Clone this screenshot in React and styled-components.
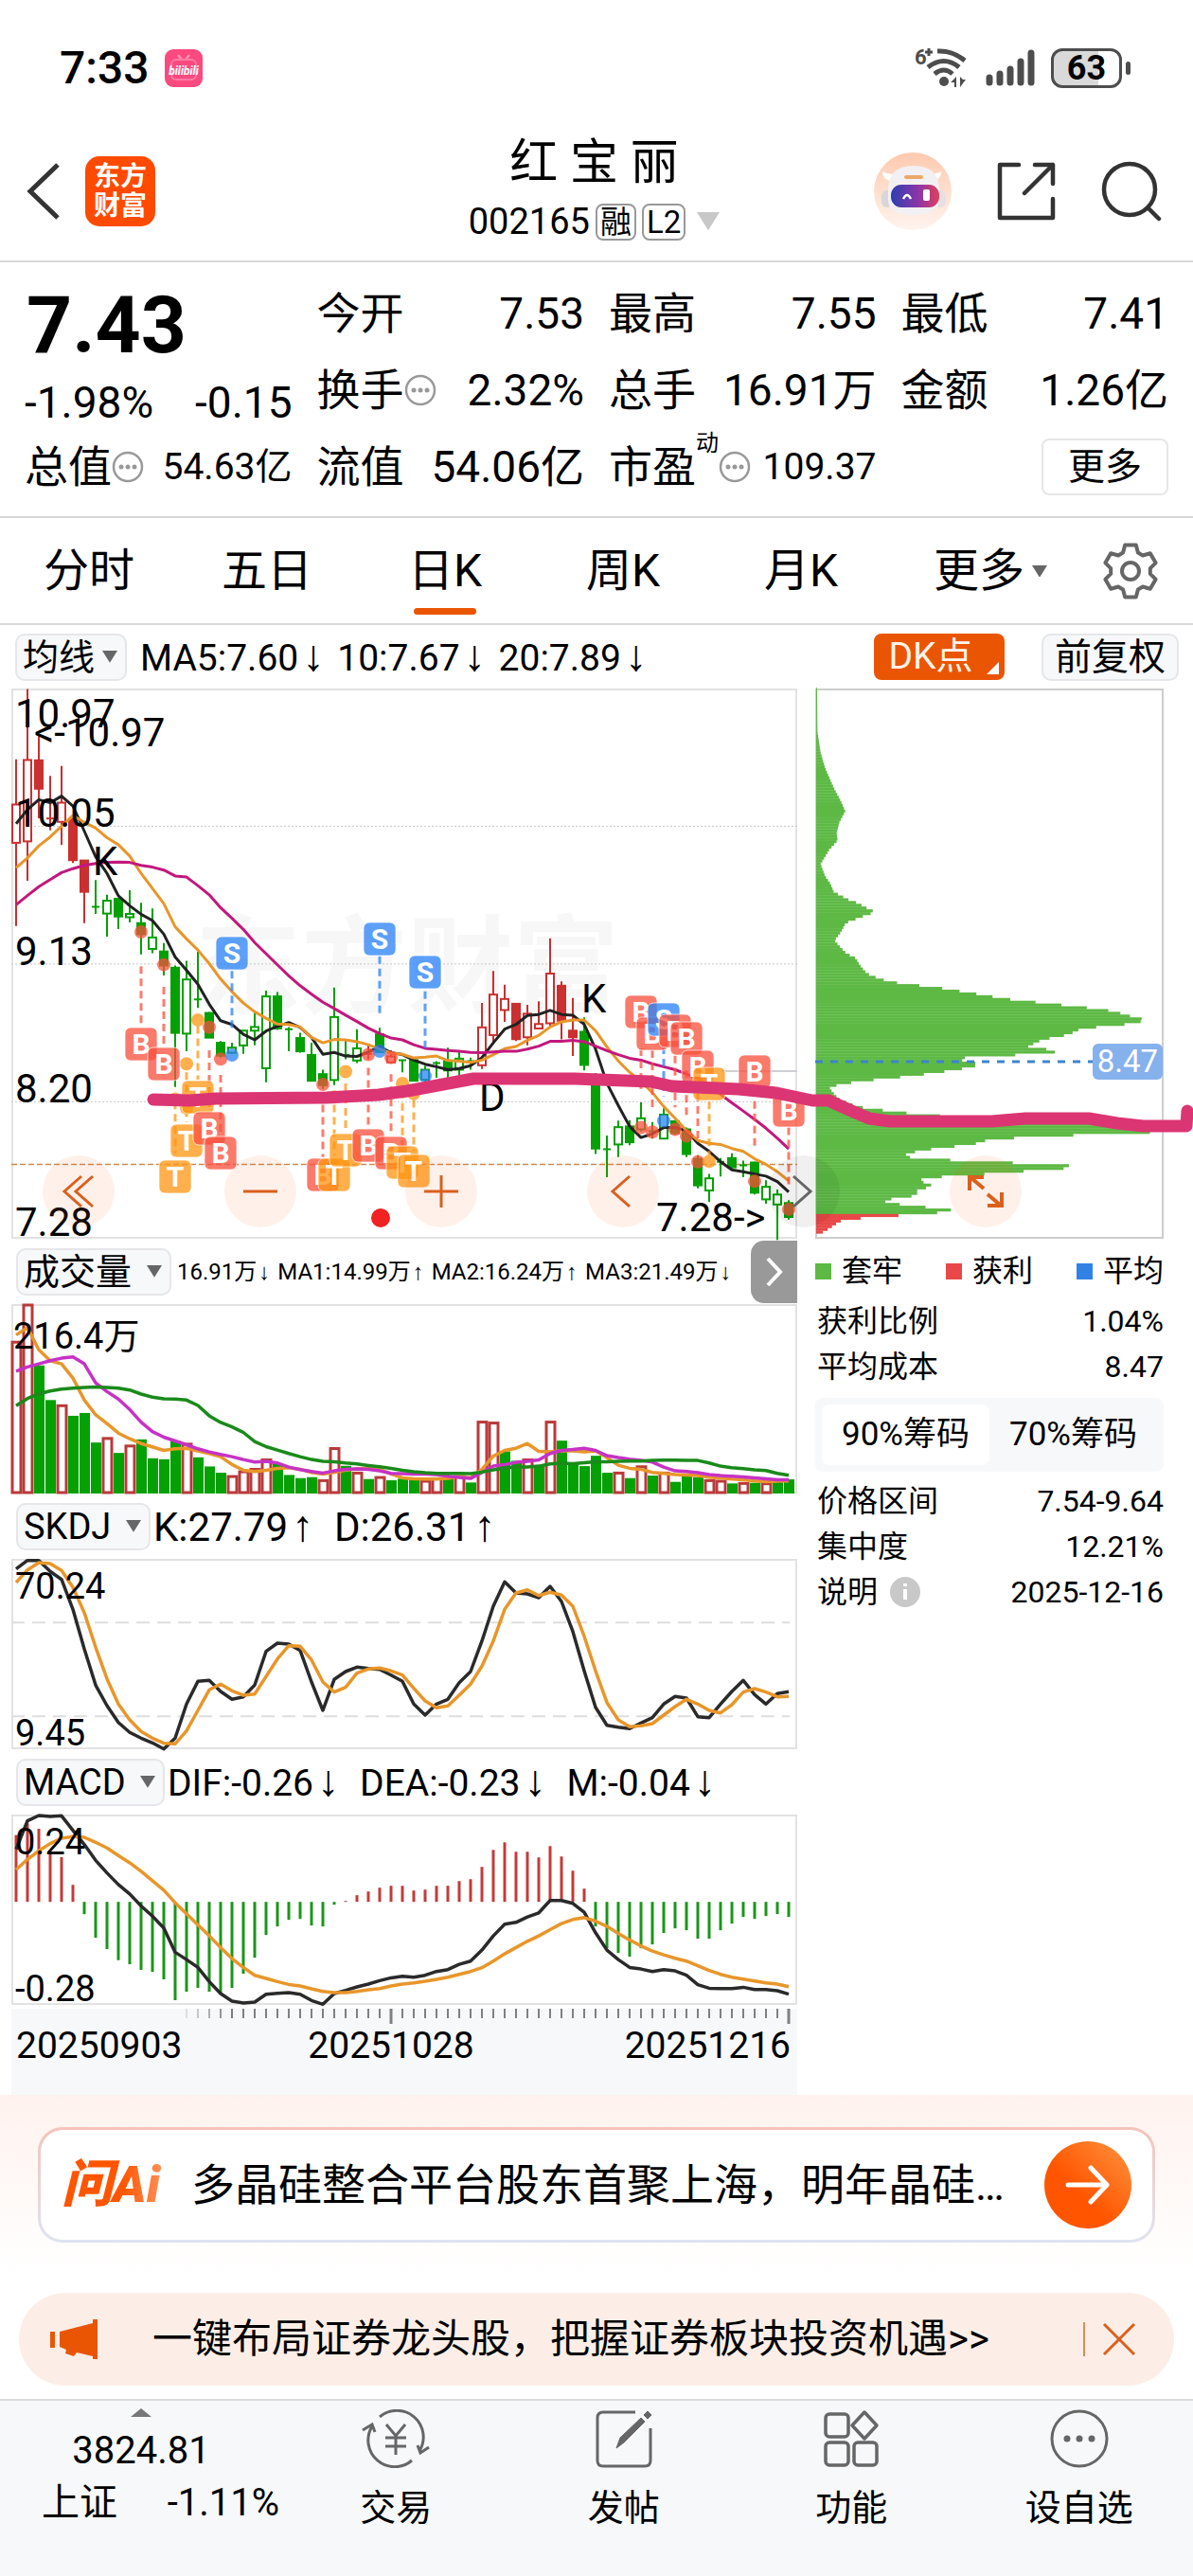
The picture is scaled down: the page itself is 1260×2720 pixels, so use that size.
import React, { useState } from 'react';
import styled, { createGlobalStyle } from 'styled-components';

const INK = '#000';
const ACCENT = '#ea5504';
const RED = '#c9302f';
const GREEN = '#04a004';
const FONT = `Roboto, 'Noto Sans CJK SC', sans-serif`;

/* ---------- chart data ---------- */

// [high, body top, body bottom, low, kind]
// R / G = filled, r / g = hollow, x = red cross, c = green cross
const CANDLES = [
  [235, 358, 462, 688, 'r'], [44, 237, 458, 565, 'r'], [172, 238, 315, 395, 'R'],
  [280, 396, 396, 428, 'x'], [253, 353, 405, 468, 'r'], [395, 398, 509, 517, 'R'],
  [510, 510, 595, 680, 'R'], [563, 636, 636, 655, 'c'], [603, 619, 654, 717, 'g'],
  [614, 614, 662, 696, 'G'], [591, 655, 664, 678, 'g'], [625, 680, 710, 765, 'G'],
  [640, 719, 750, 762, 'g'], [734, 757, 795, 822, 'G'], [795, 801, 978, 1125, 'G'],
  [782, 833, 980, 1028, 'g'], [757, 887, 887, 910, 'c'], [921, 924, 991, 991, 'G'],
  [1000, 1005, 1040, 1045, 'G'], [1005, 1018, 1032, 1035, 'g'], [970, 972, 1012, 1035, 'g'],
  [921, 962, 972, 1012, 'g'], [863, 879, 1074, 1112, 'g'], [867, 879, 966, 970, 'G'],
  [962, 968, 968, 1028, 'c'], [978, 992, 1028, 1032, 'G'], [1005, 1038, 1108, 1110, 'G'],
  [1078, 1090, 1120, 1130, 'G'], [855, 935, 1106, 1120, 'g'], [1000, 1038, 1038, 1050, 'c'],
  [968, 1020, 1053, 1060, 'g'], [1010, 1035, 1035, 1050, 'x'], [964, 982, 1030, 1030, 'G'],
  [1025, 1042, 1058, 1060, 'r'], [1050, 1052, 1052, 1085, 'c'], [1050, 1052, 1108, 1110, 'G'],
  [1068, 1078, 1105, 1110, 'g'], [1055, 1060, 1060, 1100, 'c'], [1018, 1055, 1080, 1108, 'G'],
  [1025, 1048, 1078, 1105, 'g'], [1045, 1055, 1055, 1078, 'c'], [897, 963, 1066, 1076, 'r'],
  [810, 874, 984, 1010, 'r'], [847, 886, 916, 948, 'r'], [898, 899, 995, 1000, 'R'],
  [902, 926, 990, 1012, 'r'], [892, 954, 966, 966, 'r'], [721, 817, 952, 960, 'r'],
  [838, 850, 945, 996, 'R'], [883, 972, 990, 1041, 'R'], [936, 975, 1065, 1080, 'G'],
  [1087, 1115, 1292, 1307, 'G'], [1257, 1294, 1294, 1370, 'c'], [1216, 1234, 1281, 1315, 'g'],
  [1215, 1232, 1275, 1283, 'G'], [1167, 1210, 1240, 1245, 'g'], [1220, 1245, 1245, 1265, 'c'],
  [1183, 1200, 1265, 1265, 'g'], [1215, 1218, 1250, 1255, 'G'], [1235, 1240, 1307, 1315, 'G'],
  [1310, 1320, 1392, 1400, 'G'], [1361, 1373, 1406, 1437, 'g'], [1318, 1328, 1328, 1368, 'c'],
  [1305, 1318, 1343, 1350, 'G'], [1325, 1338, 1338, 1370, 'c'], [1328, 1330, 1412, 1417, 'G'],
  [1378, 1396, 1430, 1442, 'g'], [1403, 1417, 1444, 1540, 'g'], [1432, 1440, 1478, 1485, 'G'],
];

const MA5 = [410, 372, 345, 353, 335, 362, 430, 500, 545, 606, 633, 656, 673, 710, 772, 808, 846, 900, 945, 955, 982, 997, 973, 960, 950, 963, 990, 1036, 1031, 1041, 1042, 1030, 1015, 1032, 1037, 1052, 1063, 1070, 1078, 1075, 1067, 1045, 1005, 968, 955, 931, 928, 917, 928, 930, 955, 1022, 1115, 1175, 1232, 1262, 1252, 1235, 1235, 1243, 1278, 1300, 1328, 1350, 1355, 1361, 1367, 1382, 1410];
const MA10 = [530, 503, 470, 446, 417, 388, 406, 422, 448, 467, 498, 545, 586, 627, 690, 723, 753, 790, 832, 866, 897, 921, 938, 954, 955, 962, 990, 1005, 996, 997, 1002, 1010, 1022, 1033, 1036, 1046, 1044, 1041, 1053, 1055, 1058, 1052, 1037, 1021, 1015, 998, 985, 962, 948, 943, 943, 972, 1016, 1054, 1085, 1110, 1140, 1178, 1210, 1243, 1270, 1278, 1281, 1292, 1300, 1320, 1335, 1355, 1380];
const MA20 = [630, 605, 581, 562, 543, 532, 523, 518, 515, 514, 515, 523, 528, 536, 552, 555, 578, 603, 638, 667, 697, 733, 763, 793, 823, 850, 873, 895, 912, 930, 947, 965, 980, 992, 997, 1010, 1020, 1023, 1026, 1028, 1031, 1032, 1030, 1028, 1028, 1022, 1014, 1001, 1001, 998, 1002, 1014, 1026, 1037, 1047, 1052, 1062, 1070, 1078, 1090, 1102, 1120, 1145, 1168, 1190, 1213, 1237, 1264, 1293];

const SIGNAL_LINES = [
  [11, 797, 955, 'B'], [13, 853, 1015, 'B'], [14, 1165, 1305, 'T'], [15, 1085, 1220, 'T'],
  [16, 960, 1105, 'T'], [17, 1025, 1190, 'B'], [18, 1092, 1255, 'B'], [19, 810, 968, 'S'],
  [27, 1140, 1315, 'B'], [28, 1140, 1310, 'T'], [29, 1115, 1245, 'T'], [31, 1073, 1235, 'B'],
  [32, 770, 930, 'S'], [33, 1090, 1255, 'B'], [34, 1135, 1285, 'T'], [35, 1160, 1300, 'T'],
  [36, 865, 1020, 'S'], [55, 1020, 1130, 'B'], [56, 1025, 1190, 'B'], [57, 1015, 1150, 'S'],
  [58, 1040, 1180, 'B'], [59, 1080, 1205, 'B'], [60, 1110, 1275, 'B'], [61, 1165, 1310, 'T'],
  [65, 1130, 1295, 'B'], [68, 1235, 1400, 'B'],
];

const SIGNAL_DOTS = [
  [11, 704, 'B'], [13, 793, 'B'], [14, 1158, 'T'], [15, 1062, 'T'], [15, 1182, 'T'], [16, 943, 'T'],
  [17, 963, 'B'], [18, 1049, 'B'], [19, 1038, 'S'], [27, 1118, 'B'], [28, 1152, 'T'], [29, 1083, 'T'],
  [31, 1037, 'B'], [32, 1028, 'S'], [33, 1045, 'B'], [34, 1115, 'T'], [35, 1143, 'T'], [36, 1095, 'S'],
  [55, 1235, 'B'], [56, 1247, 'B'], [57, 1217, 'S'], [58, 1240, 'B'], [59, 1258, 'B'], [60, 1328, 'B'],
  [61, 1327, 'T'], [65, 1381, 'B'], [68, 1457, 'B'],
];

const SIGNALS = [
  [11, 1006, 'B'], [13, 1062, 'B'], [19, 760, 'S'], [32, 721, 'S'], [16, 1150, 'T'], [15, 1270, 'T'],
  [14, 1368, 'T'], [17, 1235, 'B'], [18, 1302, 'B'], [27, 1363, 'B'], [28, 1363, 'T'], [29, 1295, 'T'],
  [31, 1283, 'B'], [33, 1302, 'B'], [34, 1328, 'T'], [35, 1351, 'T'], [36, 813, 'S'], [55, 921, 'B'],
  [56, 978, 'B'], [57, 940, 'S'], [58, 970, 'B'], [59, 993, 'B'], [60, 1068, 'B'], [61, 1116, 'T'],
  [65, 1083, 'B'], [68, 1186, 'B'],
];

const SIGNAL_COLOR = { B: '#f9503c', S: '#2a82f7', T: '#ff9612' };

const VOLUME = [348, 230, 425, 535, 550, 585, 576, 670, 654, 703, 678, 660, 720, 723, 665, 672, 717, 746, 766, 775, 760, 752, 722, 738, 773, 783, 780, 788, 686, 744, 764, 786, 778, 790, 785, 785, 790, 782, 786, 775, 797, 602, 605, 698, 728, 722, 745, 602, 664, 738, 745, 712, 766, 764, 783, 744, 775, 764, 795, 775, 780, 788, 790, 800, 797, 798, 798, 790, 787];
const VOLUME_UP = [0, 1, 4, 8, 10, 15, 19, 20, 21, 22, 27, 28, 30, 32, 36, 37, 39, 41, 42, 45, 47, 53, 55, 57, 61, 62, 64, 66];
const VOL_MA1 = [328, 305, 375, 410, 420, 465, 535, 582, 610, 640, 658, 673, 684, 695, 690, 688, 697, 705, 715, 740, 758, 762, 758, 752, 750, 755, 765, 770, 765, 758, 753, 752, 755, 770, 782, 785, 786, 786, 784, 778, 782, 755, 713, 695, 688, 673, 698, 700, 697, 697, 700, 697, 718, 742, 752, 755, 765, 768, 772, 773, 775, 780, 783, 786, 788, 792, 794, 793, 792];
const VOL_MA2 = [443, 430, 420, 410, 402, 398, 420, 480, 508, 532, 565, 605, 635, 653, 665, 677, 690, 700, 708, 715, 724, 732, 730, 735, 748, 756, 762, 767, 760, 755, 754, 755, 760, 768, 769, 770, 770, 772, 777, 781, 784, 765, 745, 740, 733, 730, 725, 705, 695, 692, 688, 695, 712, 718, 723, 727, 732, 748, 760, 762, 766, 772, 775, 777, 779, 782, 785, 788, 788];
const VOL_MA3 = [553, 530, 515, 506, 500, 497, 495, 493, 495, 497, 503, 516, 526, 531, 532, 535, 552, 585, 606, 620, 638, 667, 683, 694, 705, 715, 724, 730, 731, 735, 738, 743, 747, 752, 758, 763, 766, 768, 768, 768, 769, 764, 757, 751, 748, 748, 745, 738, 736, 737, 734, 731, 731, 730, 729, 729, 727, 726, 726, 727, 727, 735, 745, 750, 753, 757, 759, 768, 774];

const SKDJ_K = [232, 205, 205, 240, 265, 360, 485, 600, 665, 718, 750, 768, 783, 802, 768, 660, 588, 585, 620, 645, 637, 600, 493, 467, 470, 490, 590, 680, 582, 557, 543, 547, 550, 568, 588, 660, 695, 660, 645, 592, 557, 460, 350, 273, 308, 311, 323, 287, 335, 430, 555, 670, 727, 733, 738, 720, 703, 660, 636, 641, 700, 703, 660, 620, 585, 630, 660, 627, 621];
const SKDJ_D = [275, 235, 212, 215, 237, 290, 370, 480, 580, 660, 710, 747, 768, 784, 786, 745, 680, 615, 597, 618, 632, 628, 573, 517, 475, 477, 520, 590, 622, 607, 562, 549, 546, 555, 568, 610, 650, 672, 666, 632, 597, 540, 460, 360, 308, 298, 316, 306, 315, 350, 445, 555, 655, 710, 732, 729, 722, 695, 668, 645, 660, 680, 688, 662, 622, 611, 622, 637, 636];

const MACD_BAR = [235, 198, 215, 290, 305, 393, 486, 561, 597, 632, 645, 663, 669, 693, 759, 732, 720, 732, 738, 720, 675, 624, 552, 525, 504, 501, 522, 525, 456, 444, 426, 414, 402, 396, 396, 411, 408, 396, 396, 381, 375, 336, 282, 258, 288, 288, 306, 270, 303, 348, 405, 525, 594, 609, 621, 594, 582, 546, 531, 537, 564, 564, 537, 516, 495, 501, 492, 486, 495];
const MACD_ZERO = 447;
const DIF = [280, 190, 173, 176, 174, 220, 265, 315, 355, 392, 422, 460, 492, 530, 607, 630, 655, 700, 738, 762, 768, 765, 740, 737, 735, 740, 760, 772, 738, 728, 717, 708, 697, 688, 683, 686, 680, 668, 662, 645, 635, 600, 555, 518, 512, 495, 482, 443, 443, 452, 480, 545, 600, 630, 655, 660, 668, 662, 666, 680, 710, 721, 722, 722, 718, 725, 725, 729, 740];
const DEA = [345, 312, 285, 262, 245, 240, 242, 258, 276, 300, 323, 350, 380, 410, 450, 485, 520, 555, 592, 627, 655, 680, 690, 700, 709, 714, 723, 731, 735, 735, 731, 726, 722, 714, 708, 704, 699, 693, 686, 677, 668, 656, 635, 612, 592, 572, 555, 535, 516, 503, 497, 508, 525, 547, 568, 587, 603, 615, 626, 635, 650, 665, 677, 686, 692, 698, 704, 708, 716];

// chip distribution outline, [level, width]
const CHIPS = [
  [43, 3], [160, 4], [215, 14], [258, 29], [310, 56], [345, 78], [372, 92], [400, 74], [430, 65],
  [450, 68], [475, 41], [513, 14], [545, 28], [567, 46], [588, 56], [602, 88], [610, 106], [618, 134],
  [627, 151], [634, 168], [641, 188], [650, 156], [656, 138], [663, 116], [670, 94], [695, 78],
  [717, 58], [735, 76], [752, 96], [765, 126], [783, 138], [805, 160], [812, 176], [820, 203],
  [827, 229], [833, 277], [840, 350], [848, 426], [855, 469], [862, 523], [870, 576], [878, 641],
  [885, 731], [892, 801], [900, 891], [907, 946], [914, 972], [922, 1006], [930, 1050], [938, 1006],
  [945, 946], [952, 838], [960, 824], [968, 798], [975, 768], [982, 709], [990, 705], [997, 668],
  [1004, 676], [1010, 756], [1020, 756], [1026, 488], [1035, 452], [1042, 481], [1048, 528],
  [1056, 484], [1063, 443], [1071, 373], [1078, 311], [1086, 221], [1094, 129], [1101, 84],
  [1108, 41], [1122, 51], [1140, 71], [1158, 121], [1165, 156], [1173, 232], [1180, 305],
  [1188, 430], [1200, 720], [1213, 1101], [1229, 1101], [1233, 926], [1240, 749], [1247, 571],
  [1255, 516], [1263, 499], [1270, 393], [1278, 341], [1285, 290], [1293, 280], [1300, 314],
  [1307, 508], [1314, 691], [1322, 874], [1330, 703], [1337, 614], [1345, 452], [1352, 341],
  [1359, 327], [1367, 352], [1374, 376], [1382, 320], [1398, 320], [1405, 263], [1411, 206],
  [1418, 229], [1425, 286], [1433, 387], [1440, 454], [1448, 331], [1455, 208], [1463, 86],
  [1470, 71], [1478, 56], [1486, 43], [1493, 28], [1500, 14],
];

/* ---------- helpers ---------- */

const scale = (top, bottom, height) => (v) => ((v - top) * height) / (bottom - top);
const colX = (i) => 5 + i * 12;
const line = (values, y) => values.map((v, i) => `${colX(i)},${y(v).toFixed(1)}`).join(' ');

const gearPath = () => {
  const pts = [];
  for (let k = 0; k < 6; k += 1) {
    [[-22, 21], [-12, 28], [12, 28], [22, 21]].forEach(([d, r]) => {
      const a = ((k * 60 + d - 90) * Math.PI) / 180;
      pts.push(`${(30 + r * Math.cos(a)).toFixed(1)} ${(30 + r * Math.sin(a)).toFixed(1)}`);
    });
  }
  return `M${pts.join('L')}Z`;
};

/* ---------- charts ---------- */

function SignalBadge({ x, y, kind }) {
  return (
    <g>
      <rect x={x - 17} y={y - 17} width="34" height="35" rx="6" fill={SIGNAL_COLOR[kind]} fillOpacity="0.76" stroke="#fff" strokeOpacity="0.7" />
      <text x={x} y={y + 11} textAnchor="middle" fontSize="30" fontWeight="700" fill="#fff">{kind}</text>
    </g>
  );
}

function CandleChart() {
  const y = scale(43, 1537, 581);
  return (
    <Chart viewBox="0 0 830 581" role="img" aria-label="日K">
      <rect x="1" y="1" width="828" height="579" fill="#fff" stroke="#e2e2e2" strokeWidth="2" />
      <text x="194" y="334" fontSize="112" fontWeight="700" fill="#f7f7f7">东方财富</text>
      {[417, 791, 1165].map((v) => (
        <line key={v} x1="0" x2="830" y1={y(v)} y2={y(v)} stroke="#c8c8c8" strokeDasharray="2 2" />
      ))}
      <line x1="750" x2="830" y1={y(1082)} y2={y(1082)} stroke="#cfcfd4" strokeWidth="2" />
      <line x1="0" x2="830" y1={y(1335)} y2={y(1335)} stroke="#cf8a50" strokeWidth="1.5" strokeDasharray="6 3" />
      {CANDLES.map(([hi, top, bottom, lo, kind], i) => {
        const color = 'Rrx'.includes(kind) ? RED : GREEN;
        const x = colX(i);
        if ('xc'.includes(kind)) {
          return <path key={i} d={`M${x} ${y(hi)}V${y(lo)}M${x - 4} ${y(top)}H${x + 4}`} stroke={color} strokeWidth="2" />;
        }
        const hollow = 'rg'.includes(kind);
        return (
          <g key={i} stroke={color} strokeWidth="2">
            <path d={`M${x} ${y(hi)}V${y(top)}M${x} ${y(bottom)}V${y(lo)}`} />
            <rect x={x - 4} y={y(top)} width="8" height={Math.max(2, y(bottom) - y(top))} fill={hollow ? '#fff' : color} />
          </g>
        );
      })}
      <g fill="none" strokeWidth="3" strokeLinejoin="round">
        <polyline points={line(MA5, y)} stroke="#222" />
        <polyline points={line(MA10, y)} stroke="#e8962a" />
        <polyline points={line(MA20, y)} stroke="#c2187c" />
      </g>
      {SIGNAL_LINES.map(([i, a, b, kind]) => (
        <line key={`${i}${a}`} x1={colX(i)} x2={colX(i)} y1={y(a)} y2={y(b)} stroke={SIGNAL_COLOR[kind]} strokeOpacity="0.75" strokeWidth="3" strokeDasharray="8 5" />
      ))}
      {SIGNAL_DOTS.map(([i, v, kind]) => (
        <circle key={`${i}${v}`} cx={colX(i)} cy={y(v)} r="7" fill={SIGNAL_COLOR[kind]} fillOpacity="0.75" />
      ))}
      {SIGNALS.map(([i, v, kind]) => (
        <SignalBadge key={`${i}${v}`} x={Math.round(colX(i))} y={Math.round(y(v))} kind={kind} />
      ))}
      <circle cx="390" cy="559" r="10" fill="#f02222" />
      <g fontSize="42" fill={INK}>
        <text x="4" y="41">10.97</text>
        <text x="24" y="61">&lt;-10.97</text>
        <text x="4" y="146">10.05</text>
        <text x="4" y="292">9.13</text>
        <text x="4" y="437">8.20</text>
        <text x="4" y="578">7.28</text>
        <text x="86" y="197">K</text>
        <text x="602" y="342">K</text>
        <text x="494" y="446">D</text>
        <text x="681" y="573">7.28-&gt;</text>
      </g>
    </Chart>
  );
}

function VolumeChart() {
  const y = scale(230, 832, 200);
  return (
    <Chart viewBox="0 0 830 200" role="img" aria-label="成交量">
      <rect x="1" y="1" width="828" height="198" fill="#fff" stroke="#e2e2e2" strokeWidth="2" />
      {VOLUME.map((v, i) => {
        const up = VOLUME_UP.includes(i);
        return (
          <rect
            key={i}
            x={up ? colX(i) - 4 : colX(i) - 5}
            y={up ? y(v) + 1 : y(v)}
            width={up ? 9 : 11}
            height={up ? 198 - y(v) : 200 - y(v)}
            fill={up ? '#fff' : GREEN}
            stroke={up ? '#b93a3a' : 'none'}
            strokeWidth="3"
          />
        );
      })}
      <g fill="none" strokeWidth="3.5" strokeLinejoin="round">
        <polyline points={line(VOL_MA1, y)} stroke="#e8962a" />
        <polyline points={line(VOL_MA2, y)} stroke="#c632c6" />
        <polyline points={line(VOL_MA3, y)} stroke="#1a8a1a" />
      </g>
      <text x="2" y="47" fontSize="38" fill={INK}>216.4万</text>
    </Chart>
  );
}

function SkdjChart() {
  const y = scale(200, 803, 201);
  return (
    <Chart viewBox="0 0 830 201" role="img" aria-label="SKDJ">
      <rect x="1" y="1" width="828" height="199" fill="#fff" stroke="#e2e2e2" strokeWidth="2" />
      {[402, 699].map((v) => (
        <line key={v} x1="0" x2="822" y1={y(v)} y2={y(v)} stroke="#dedede" strokeWidth="2" strokeDasharray="14 8" />
      ))}
      <g fill="none" strokeWidth="3.5" strokeLinejoin="round">
        <polyline points={line(SKDJ_K, y)} stroke="#2a2a2a" />
        <polyline points={line(SKDJ_D, y)} stroke="#e8962a" />
      </g>
      <g fontSize="38" fill={INK}>
        <text x="4" y="42">70.24</text>
        <text x="4" y="197">9.45</text>
      </g>
    </Chart>
  );
}

function MacdChart() {
  const y = scale(170, 774, 201);
  return (
    <Chart viewBox="0 0 830 201" role="img" aria-label="MACD">
      <rect x="1" y="1" width="828" height="199" fill="#fff" stroke="#e2e2e2" strokeWidth="2" />
      {MACD_BAR.map((v, i) => (
        <line key={i} x1={colX(i)} x2={colX(i)} y1={y(MACD_ZERO)} y2={y(v)} stroke={v < MACD_ZERO ? '#c43a3a' : '#1a961a'} strokeWidth="3" />
      ))}
      <g fill="none" strokeWidth="3.5" strokeLinejoin="round">
        <polyline points={line(DIF, y)} stroke="#2a2a2a" />
        <polyline points={line(DEA, y)} stroke="#e8962a" />
      </g>
      <g fontSize="38" fill={INK}>
        <text x="4" y="42">0.24</text>
        <text x="4" y="197">-0.28</text>
      </g>
    </Chart>
  );
}

function DateAxis() {
  return (
    <Axis viewBox="0 0 830 91" role="img" aria-label="日期">
      {Array.from({ length: 54 }, (_, k) => k + 15).map((i) => {
        const major = i === 33 || i === 68;
        return (
          <line key={i} x1={colX(i)} x2={colX(i)} y1="0" y2={major ? 16 : 10} stroke="#808080" strokeWidth={major ? 3 : 2} opacity={Math.min(1, (i - 14) / 5)} />
        );
      })}
      <g fontSize="39" fill={INK}>
        <text x="5" y="52">20250903</text>
        <text x="401" y="52" textAnchor="middle">20251028</text>
        <text x="823" y="52" textAnchor="end">20251216</text>
      </g>
    </Axis>
  );
}

function ChipChart() {
  const y = scale(43, 1513, 581);
  const widthAt = (v) => {
    const k = CHIPS.findIndex(([level]) => level >= v);
    if (k < 1) return 0;
    const [v0, w0] = CHIPS[k - 1];
    const [v1, w1] = CHIPS[k];
    return (w0 + ((w1 - w0) * (v - v0)) / (v1 - v0)) / 3;
  };
  const rows = [];
  for (let v = 46; v < 1500; v += 7.4) rows.push(v);
  return (
    <Chart viewBox="0 0 368 581" role="img" aria-label="筹码分布">
      <rect x="1" y="1" width="366" height="579" fill="#fff" stroke="#cdcdcd" strokeWidth="2" />
      {rows.map((v) => (
        <rect key={v} x="1" y={y(v) - 2} width={Math.min(366, widthAt(v))} height="3.2" fill={v > 1451 ? '#e84848' : '#5db944'} />
      ))}
      <line x1="0" x2="294" y1="394" y2="394" stroke="#3f83cf" strokeWidth="3" strokeDasharray="8 8" />
      <rect x="293" y="375" width="74" height="38" rx="6" fill="#85b1ec" />
      <text x="330" y="405" textAnchor="middle" fontSize="33" fill="#fff">8.47</text>
    </Chart>
  );
}

/* ---------- icons ---------- */

const WifiIcon = () => (
  <WifiSvg width="58" height="44" viewBox="0 0 58 44" fill="none" stroke="#4d4d4d" strokeWidth="5">
    <text x="0" y="18" fontSize="22" fontWeight="700" fill="#4d4d4d" stroke="none">6</text>
    <path d="M11 5h8M15 1v8" strokeWidth="3" />
    <path d="M24 4Q40 3 53 14M14 21Q31 8 47 21M21 28Q31 20 40 28" />
    <circle cx="31" cy="36" r="5" fill="#4d4d4d" stroke="none" />
    <path d="M38 37l6-6v11h-2v-5zM48 31v11l6-8h-3z" fill="#4d4d4d" stroke="none" />
  </WifiSvg>
);

const CellIcon = () => (
  <svg width="52" height="42" viewBox="0 0 52 42" stroke="#4d4d4d" strokeWidth="7" strokeLinecap="round">
    <path d="M4 31v5M15 27v9M26 22v14M37 14v22M48 5v31" />
  </svg>
);

const RobotIcon = () => (
  <svg width="82" height="82" viewBox="0 0 82 82">
    <defs>
      <linearGradient id="halo" x1="0" y1="0" x2="0" y2="1"><stop stopColor="#ffc9ae" /><stop offset="1" stopColor="#fff4ef" /></linearGradient>
      <linearGradient id="visor"><stop stopColor="#2c3fb0" /><stop offset="0.55" stopColor="#8a35a8" /><stop offset="1" stopColor="#e0405c" /></linearGradient>
    </defs>
    <circle cx="41" cy="41" r="41" fill="url(#halo)" />
    <path d="M9 20q0 8 8 10l7-8q-9 2-15-2zM71 20q0 8-8 10l-7-8q9 2 15-2z" fill="#fff" />
    <rect x="8" y="40" width="12" height="18" rx="6" fill="#d9d6da" />
    <rect x="64" y="40" width="12" height="18" rx="6" fill="#e4e0e4" />
    <path d="M15 40q0-26 27-26t27 26v10q0 16-27 16T15 50z" fill="#f2f0f2" />
    <rect x="32" y="24" width="20" height="4" rx="2" fill="#eda868" />
    <rect x="18" y="34" width="51" height="24" rx="11" fill="url(#visor)" />
    <path d="M31 49q4-8 8 0" fill="none" stroke="#fff" strokeWidth="2.5" />
    <rect x="52" y="39" width="7" height="12" rx="2" fill="#fff" />
  </svg>
);

const ShareIcon = () => (
  <svg width="62" height="62" viewBox="0 0 62 62" fill="none" stroke="#333" strokeWidth="4.5" strokeLinecap="round" strokeLinejoin="round">
    <path d="M23 3H3v56h56V39M40 3h19v20M59 3L29 33" />
  </svg>
);

const SearchIcon = () => (
  <svg width="64" height="64" viewBox="0 0 64 64" fill="none" stroke="#333" strokeWidth="4.5" strokeLinecap="round">
    <circle cx="30" cy="30" r="27" />
    <path d="M50 50l11 11" />
  </svg>
);

const MoreDots = () => (
  <svg width="34" height="34" viewBox="0 0 34 34">
    <circle cx="17" cy="17" r="15" fill="none" stroke="#999" strokeWidth="2.5" />
    <g fill="#999"><circle cx="10" cy="17" r="2.5" /><circle cx="17" cy="17" r="2.5" /><circle cx="24" cy="17" r="2.5" /></g>
  </svg>
);

const Caret = ({ size = 16, color = '#666' }) => (
  <svg width={size} height={size * 0.8} viewBox="0 0 10 8"><path d="M0 0h10L5 8z" fill={color} /></svg>
);

const MegaphoneIcon = () => (
  <svg width="50" height="42" viewBox="0 0 50 42" fill="#ea5504">
    <path d="M0 13h5v17H0zM10 13L45 4V0h5v42h-5v-3l-17-4-3 4-9-3 1-4-7-3z" />
  </svg>
);

const TradeIcon = () => (
  <svg width="72" height="62" viewBox="0 0 72 62" fill="none" stroke="#666" strokeWidth="3">
    <path d="M19 8A28 28 0 0 1 61 44M53 54A28 28 0 0 1 11 18M1 22l10-6 3 8M71 40l-9 6-3-8" />
    <path d="M26 16l10 12 10-12M36 28v20M25 30h22M25 39h22" />
  </svg>
);

const PostIcon = () => (
  <svg width="60" height="62" viewBox="0 0 60 62" fill="none" stroke="#666" strokeWidth="3">
    <path d="M42 3H8Q2 3 2 9v45q0 6 6 6h44q6 0 6-6V20" />
    <path d="M22 41l4-11L48 9l4 4-22 22zM51 6l4-4 4 4-4 4z" fill="#666" strokeWidth="1" />
  </svg>
);

const FeatureIcon = () => (
  <svg width="60" height="62" viewBox="0 0 60 62" fill="none" stroke="#666" strokeWidth="3.5">
    <rect x="3" y="5" width="24" height="24" rx="4" />
    <rect x="3" y="35" width="24" height="24" rx="4" />
    <rect x="33" y="35" width="24" height="24" rx="4" />
    <path d="M44 3l13 14-13 14-13-14z" strokeLinejoin="round" />
  </svg>
);

const WatchIcon = () => (
  <svg width="62" height="62" viewBox="0 0 62 62">
    <circle cx="31" cy="31" r="29" fill="none" stroke="#666" strokeWidth="3" />
    <g fill="#666"><circle cx="18" cy="31" r="3.5" /><circle cx="31" cy="31" r="3.5" /><circle cx="44" cy="31" r="3.5" /></g>
  </svg>
);

/* ---------- pieces ---------- */

function Trend({ children, down }) {
  return (
    <span>
      {children}
      <Arrow>{down ? '↓' : '↑'}</Arrow>
    </span>
  );
}

function IndicatorPicker({ name, compact }) {
  return (
    <Picker $compact={compact}>
      <select aria-label={name} defaultValue={name}>
        <option>{name}</option>
      </select>
      <Caret />
    </Picker>
  );
}

const TABS = ['分时', '五日', '日K', '周K', '月K', '更多'];

const QUOTES = [
  { label: '今开', value: '7.53' },
  { label: '最高', value: '7.55' },
  { label: '最低', value: '7.41' },
  { label: '换手', value: '2.32%', info: true },
  { label: '总手', value: '16.91万' },
  { label: '金额', value: '1.26亿' },
  { label: '总值', value: '54.63亿', info: true, small: true },
  { label: '流值', value: '54.06亿' },
  { label: '市盈', sup: '动', value: '109.37', info: true, small: true },
];

const NAV = [
  { label: '交易', Icon: TradeIcon },
  { label: '发帖', Icon: PostIcon },
  { label: '功能', Icon: FeatureIcon },
  { label: '设自选', Icon: WatchIcon },
];

const CONTROLS = [
  { label: '最早', d: 'M27 8L9 24l18 16M39 8L21 24l18 16' },
  { label: '缩小', d: 'M6 24h36' },
  { label: '放大', d: 'M6 24h36M24 7v34' },
  { label: '向左', d: 'M31 8L13 24l18 16' },
  { label: '向右', d: 'M13 8l18 16-18 16', dim: true },
  { label: '全屏', d: 'M7 23V9h15M9 10l13 11M41 25v14H26M39 38L26 27', bold: true },
];

export default function App() {
  const [tab, setTab] = useState('日K');
  const [range, setRange] = useState('90%筹码');

  return (
    <Page>
      <GlobalStyle />
      <StatusBar>
        <Clock>7:33</Clock>
        <AppBadge viewBox="0 0 40 40" aria-hidden="true">
          <rect width="40" height="40" rx="9" fill="#fb4a80" />
          <path d="M14 6l4 5M26 6l-4 5" stroke="#fd8fb2" strokeWidth="2.5" />
          <rect x="7" y="11" width="26" height="21" rx="5" fill="none" stroke="#fd7ba4" strokeWidth="2" />
          <text x="20" y="27" textAnchor="middle" fontSize="12" fontWeight="700" fontStyle="italic" fill="#fff">bilibili</text>
        </AppBadge>
        <StatusIcons>
          <WifiIcon />
          <CellIcon />
          <Battery><span>63</span></Battery>
        </StatusIcons>
      </StatusBar>

      <Header>
        <HeaderSide>
          <IconButton aria-label="返回">
            <svg width="36" height="60" viewBox="0 0 36 60" fill="none" stroke="#333" strokeWidth="5"><path d="M33 2L4 30l29 28" /></svg>
          </IconButton>
          <Logo>东方<br />财富</Logo>
        </HeaderSide>
        <HeaderTitle>
          <h1>红 宝 丽</h1>
          <StockCode>
            002165<Tag>融</Tag><Tag>L2</Tag>
            <Caret size={24} color="#c8c8c8" />
          </StockCode>
        </HeaderTitle>
        <HeaderSide $end>
          <IconButton aria-label="AI助手"><RobotIcon /></IconButton>
          <IconButton aria-label="分享"><ShareIcon /></IconButton>
          <IconButton aria-label="搜索"><SearchIcon /></IconButton>
        </HeaderSide>
      </Header>

      <QuotePanel>
        <PriceBlock>
          <Price>7.43</Price>
          <Change><span>-1.98%</span><span>-0.15</span></Change>
        </PriceBlock>
        {QUOTES.map((q) => (
          <Quote key={q.label}>
            {q.label}
            {q.sup && <Sup>{q.sup}</Sup>}
            {q.info && <MoreDots />}
            <QuoteValue $small={q.small}>{q.value}</QuoteValue>
          </Quote>
        ))}
        <MoreButton>更多</MoreButton>
      </QuotePanel>

      <Tabs>
        {TABS.map((t) => (
          <Tab key={t} $active={t === tab} $menu={t === '更多'} onClick={() => setTab(t)}>
            <span>{t}{t === '更多' && <Caret />}</span>
          </Tab>
        ))}
        <SettingsButton aria-label="设置">
          <svg width="60" height="60" viewBox="0 0 60 60" fill="none" stroke="#666" strokeWidth="4" strokeLinejoin="round">
            <path d={gearPath()} />
            <circle cx="30" cy="30" r="9" />
          </svg>
        </SettingsButton>
      </Tabs>

      <MaRow>
        <IndicatorPicker name="均线" compact />
        <Values $gap={10} $indent={14} $size={39}>
          <Trend down>MA5:7.60</Trend>
          <Trend down>10:7.67</Trend>
          <Trend down>20:7.89</Trend>
        </Values>
        <DkButton>DK点</DkButton>
        <PlainButton>前复权</PlainButton>
      </MaRow>

      <Main>
        <div>
          <CandleChart />
          <IndicatorRow>
            <IndicatorPicker name="成交量" />
            <SmallValues $gap={6} $indent={6} $size={24}>
              <Trend down>16.91万</Trend>
              <Trend>MA1:14.99万</Trend>
              <Trend>MA2:16.24万</Trend>
              <Trend down>MA3:21.49万</Trend>
            </SmallValues>
            <NextButton aria-label="更多指标">
              <svg width="20" height="32" viewBox="0 0 20 32" fill="none" stroke="#fff" strokeWidth="4"><path d="M3 2l13 14L3 30" /></svg>
            </NextButton>
          </IndicatorRow>
          <VolumeChart />
          <IndicatorRow>
            <IndicatorPicker name="SKDJ" />
            <Values $gap={18} $indent={3} $size={42}>
              <Trend>K:27.79</Trend>
              <Trend>D:26.31</Trend>
            </Values>
          </IndicatorRow>
          <SkdjChart />
          <IndicatorRow>
            <IndicatorPicker name="MACD" />
            <Values $gap={18} $indent={3} $size={39}>
              <Trend down>DIF:-0.26</Trend>
              <Trend down>DEA:-0.23</Trend>
              <Trend down>M:-0.04</Trend>
            </Values>
          </IndicatorRow>
          <MacdChart />
          <DateAxis />
        </div>

        <aside>
          <ChipChart />
          <Legend>
            <LegendItem $color="#5db944">套牢</LegendItem>
            <LegendItem $color="#e84848">获利</LegendItem>
            <LegendItem $color="#3282e6">平均</LegendItem>
          </Legend>
          <InfoRow><span>获利比例</span><span>1.04%</span></InfoRow>
          <InfoRow><span>平均成本</span><span>8.47</span></InfoRow>
          <Toggle>
            {['90%筹码', '70%筹码'].map((r) => (
              <ToggleButton key={r} $active={r === range} onClick={() => setRange(r)}>{r}</ToggleButton>
            ))}
          </Toggle>
          <InfoRow><span>价格区间</span><span>7.54-9.64</span></InfoRow>
          <InfoRow><span>集中度</span><span>12.21%</span></InfoRow>
          <InfoRow>
            <span>
              说明
              <svg width="34" height="34" viewBox="0 0 34 34">
                <circle cx="17" cy="17" r="16" fill="#c8c8c8" />
                <path d="M17 14v11M17 8v3" stroke="#fff" strokeWidth="4" />
              </svg>
            </span>
            <span>2025-12-16</span>
          </InfoRow>
        </aside>

        <ChartOverlay>
          <svg viewBox="0 0 1260 581" aria-hidden="true">
            <path
              d="M162 434L200 435L228 433L345 432L400 429L430 425L500 412L607 412L687 415L710 420L780 423L820 427L858 435L875 435L897 445L918 454L940 457L1047 457L1083 454L1150 454L1180 459L1207 462L1253 462L1254 446"
              fill="none"
              stroke="#dc3573"
              strokeWidth="13"
              strokeLinecap="round"
              strokeLinejoin="round"
            />
          </svg>
          <Controls>
            {CONTROLS.map((c) => (
              <RoundButton key={c.label} aria-label={c.label} $dim={c.dim}>
                <svg width="48" height="48" viewBox="0 0 48 48" fill="none" stroke={c.dim ? '#666' : '#d9601e'} strokeWidth={c.bold ? 4 : 3}><path d={c.d} /></svg>
              </RoundButton>
            ))}
          </Controls>
        </ChartOverlay>
      </Main>

      <AiSection>
        <AiBox>
          <AiLogo>问Ai</AiLogo>
          <AiText href="#ai">多晶硅整合平台股东首聚上海，明年晶硅…</AiText>
          <AiGo aria-label="提问">
            <svg width="50" height="44" viewBox="0 0 50 44" fill="none" stroke="#fff" strokeWidth="5" strokeLinecap="round" strokeLinejoin="round"><path d="M4 22h41M28 4l17 18-17 18" /></svg>
          </AiGo>
        </AiBox>
      </AiSection>

      <Notice>
        <MegaphoneIcon />
        <a href="#notice">一键布局证券龙头股，把握证券板块投资机遇&gt;&gt;</a>
        <CloseButton aria-label="关闭">
          <svg width="36" height="36" viewBox="0 0 36 36" fill="none" stroke="#d9601e" strokeWidth="3"><path d="M2 2l32 32M34 2L2 34" /></svg>
        </CloseButton>
      </Notice>

      <BottomNav>
        <IndexCell>
          <svg width="22" height="9" viewBox="0 0 22 9"><path d="M0 9h22L11 0z" fill="#777" /></svg>
          <span>3824.81</span>
          <div><span>上证</span><span>-1.11%</span></div>
        </IndexCell>
        {NAV.map(({ label, Icon }) => (
          <NavItem key={label}>
            <Icon />
            {label}
          </NavItem>
        ))}
      </BottomNav>
    </Page>
  );
}

/* ---------- styles ---------- */

const GlobalStyle = createGlobalStyle`
  * { box-sizing: border-box; }
  body { margin: 0; background: #fff; color: ${INK}; font-family: ${FONT}; }
  button, select { margin: 0; padding: 0; border: 0; background: none; color: inherit; font-family: inherit; }
  a { color: inherit; text-decoration: none; }
  svg { display: block; flex-shrink: 0; }
`;

const Page = styled.div`
  min-height: 100vh;
  display: flex;
  flex-direction: column;
  background: #fff;
`;

const StatusBar = styled.div`
  display: flex;
  align-items: center;
  height: 144px;
  padding: 0 66px 0 63px;
`;

const Clock = styled.span`
  font-size: 48px;
  font-weight: 500;
  line-height: 60px;
`;

const AppBadge = styled.svg`
  width: 40px;
  height: 40px;
  margin-left: 16px;
`;

const StatusIcons = styled.div`
  display: flex;
  align-items: center;
  gap: 17px;
  margin-left: auto;
`;

const WifiSvg = styled.svg`
  overflow: visible;
`;

const Battery = styled.div`
  position: relative;
  display: flex;
  align-items: center;
  justify-content: center;
  width: 75px;
  height: 42px;
  margin-right: 9px;
  border: 3px solid #4d4d4d;
  border-radius: 12px;
  background: linear-gradient(to right, #d9d9d9 68%, #fff 68%);
  font-size: 36px;
  font-weight: 700;
  line-height: 36px;

  &::after {
    content: '';
    position: absolute;
    right: -12px;
    top: 11px;
    width: 5px;
    height: 14px;
    border-radius: 3px;
    background: #4d4d4d;
  }
`;

const Header = styled.header`
  display: grid;
  grid-template-columns: 1fr auto 1fr;
  align-items: center;
  height: 133px;
  padding: 0 33px 16px 28px;
  border-bottom: 2px solid #d8d8d8;
`;

const HeaderSide = styled.div`
  display: flex;
  align-items: center;
  justify-content: ${(p) => (p.$end ? 'flex-end' : 'flex-start')};
  gap: ${(p) => (p.$end ? 48 : 26)}px;
`;

const IconButton = styled.button`
  display: flex;
  cursor: pointer;
`;

const Logo = styled.div`
  width: 74px;
  height: 74px;
  padding-top: 6px;
  border-radius: 15px;
  background: #ff4a00;
  color: #fff;
  font-size: 28px;
  font-weight: 700;
  line-height: 31px;
  text-align: center;
`;

const HeaderTitle = styled.div`
  text-align: center;

  h1 {
    margin: 0 0 9px;
    font-size: 51px;
    font-weight: 400;
    line-height: 56px;
  }
`;

const StockCode = styled.div`
  display: flex;
  align-items: center;
  gap: 6px;
  font-size: 38px;
  line-height: 50px;

  svg {
    margin-left: 6px;
  }
`;

const Tag = styled.span`
  padding: 0 3px;
  border: 2px solid #999;
  border-radius: 8px;
  font-size: 33px;
  line-height: 35px;
`;

const QuotePanel = styled.section`
  display: grid;
  grid-template-columns: repeat(4, 1fr);
  grid-auto-rows: 81px;
  column-gap: 26px;
  padding: 13px 26px 12px;
  border-bottom: 2px solid #d8d8d8;
`;

const PriceBlock = styled.div`
  grid-row: span 2;
  padding-top: 12px;
`;

const Price = styled.div`
  padding-left: 2px;
  font-size: 84px;
  font-weight: 700;
  line-height: 84px;
`;

const Change = styled.div`
  display: flex;
  justify-content: space-between;
  margin-top: 16px;
  font-size: 46px;
  line-height: 46px;
`;

const Quote = styled.div`
  display: flex;
  align-items: center;
  font-size: 46px;
  line-height: 60px;
  white-space: nowrap;
`;

const Sup = styled.sup`
  align-self: flex-start;
  font-size: 24px;
  line-height: 32px;
`;

const QuoteValue = styled.span`
  margin-left: auto;
  font-size: ${(p) => (p.$small ? 39 : 46)}px;
`;

const MoreButton = styled.button`
  align-self: center;
  justify-self: end;
  width: 134px;
  height: 60px;
  border: 2px solid #e6e6e6;
  border-radius: 8px;
  font-size: 39px;
  line-height: 50px;
`;

const Tabs = styled.nav`
  display: flex;
  align-items: stretch;
  height: 113px;
  border-bottom: 2px solid #d8d8d8;
`;

const Tab = styled.button`
  flex: 1 1 0;
  display: flex;
  flex-direction: column;
  align-items: center;
  padding-top: 24px;
  font-size: 48px;
  line-height: 64px;
  cursor: pointer;

  span {
    display: flex;
    align-items: center;
    gap: 8px;
    padding-left: ${(p) => (p.$menu ? 24 : 0)}px;
    white-space: nowrap;
  }

  &::after {
    content: '';
    width: 66px;
    height: 7px;
    margin-top: 7px;
    border-radius: 4px;
    background: ${(p) => (p.$active ? ACCENT : 'transparent')};
  }
`;

const SettingsButton = styled.button`
  display: flex;
  align-items: center;
  justify-content: center;
  width: 132px;
`;

const MaRow = styled.div`
  display: flex;
  align-items: center;
  height: 67px;
  padding: 0 15px 0 16px;
`;

const Picker = styled.label`
  display: flex;
  align-items: center;
  gap: ${(p) => (p.$compact ? 7 : 15)}px;
  height: 50px;
  padding: 0 8px 0 6px;
  border: 2px solid #e6e6ea;
  border-radius: 10px;
  background: #f7f8fa;
  flex-shrink: 0;

  select {
    appearance: none;
    font-size: 38px;
    line-height: 46px;
    outline: none;
  }
`;

const Arrow = styled.span`
  padding: 0 4px;
  font-family: 'Liberation Sans', sans-serif;
  font-size: 46px;
`;

const Values = styled.div`
  display: flex;
  gap: ${(p) => p.$gap}px;
  margin-left: ${(p) => p.$indent}px;
  font-size: ${(p) => p.$size}px;
  line-height: 48px;
  white-space: nowrap;
`;

const SmallValues = styled(Values)`
  ${Arrow} {
    padding: 0 2px;
    font-size: 24px;
  }
`;

const DkButton = styled.button`
  position: relative;
  width: 138px;
  height: 49px;
  margin-left: auto;
  padding-right: 18px;
  border-radius: 8px;
  background: ${ACCENT};
  color: #fff3ea;
  font-size: 39px;
  line-height: 49px;

  &::after {
    content: '';
    position: absolute;
    right: 6px;
    bottom: 6px;
    border-left: 13px solid transparent;
    border-bottom: 13px solid #fff;
  }
`;

const PlainButton = styled.button`
  width: 145px;
  height: 50px;
  margin-left: 39px;
  border: 2px solid #e6e6ea;
  border-radius: 10px;
  background: #f7f8fa;
  font-size: 39px;
  line-height: 46px;
`;

const Main = styled.main`
  position: relative;
  display: grid;
  grid-template-columns: 830fr 368fr;
  column-gap: 19px;
  padding: 0 31px 0 12px;
`;

const Chart = styled.svg`
  width: 100%;
  height: auto;
  overflow: visible;
  font-family: ${FONT};
`;

const Axis = styled(Chart)`
  margin-top: 4px;
  background: #f7f8fa;
`;

const IndicatorRow = styled.div`
  display: flex;
  align-items: center;
  height: 69px;
  padding-left: 5px;
`;

const NextButton = styled.button`
  display: flex;
  align-items: center;
  justify-content: center;
  width: 49px;
  height: 66px;
  margin-left: auto;
  border-radius: 14px 0 0 14px;
  background: #999;
`;

const Legend = styled.div`
  display: flex;
  justify-content: space-between;
  margin: 12px 0 7px;
`;

const LegendItem = styled.span`
  display: flex;
  align-items: center;
  gap: 11px;
  font-size: 32px;
  line-height: 44px;

  &::before {
    content: '';
    width: 17px;
    height: 17px;
    background: ${(p) => p.$color};
  }
`;

const InfoRow = styled.div`
  display: flex;
  justify-content: space-between;
  padding-left: 2px;
  font-size: 32px;
  line-height: 48px;

  span {
    display: flex;
    align-items: center;
    gap: 12px;
  }
`;

const Toggle = styled.div`
  display: flex;
  height: 78px;
  margin: 9px 0 7px;
  padding: 7px;
  border-radius: 8px;
  background: #f7f8fa;
`;

const ToggleButton = styled.button`
  flex: 1;
  border-radius: 8px;
  background: ${(p) => (p.$active ? '#fff' : 'transparent')};
  font-size: 35px;
  line-height: 48px;
`;

const ChartOverlay = styled.div`
  position: absolute;
  top: 0;
  left: 0;
  width: 100%;
`;

const Controls = styled.div`
  position: absolute;
  bottom: 12px;
  left: 45px;
  right: 181px;
  display: flex;
  justify-content: space-between;
`;

const RoundButton = styled.button`
  display: flex;
  align-items: center;
  justify-content: center;
  width: 76px;
  height: 76px;
  border-radius: 50%;
  background: ${(p) => (p.$dim ? 'rgba(0, 0, 0, 0.06)' : 'rgba(250, 90, 10, 0.09)')};
`;

const AiSection = styled.section`
  padding: 34px 40px 53px;
  background: linear-gradient(#fff2ee, #fff 90%);
`;

const AiBox = styled.div`
  display: flex;
  align-items: center;
  height: 122px;
  padding: 0 22px;
  border: 3px solid transparent;
  border-radius: 26px;
  background: linear-gradient(#fff, #fff) padding-box, linear-gradient(#f4c3bb, #dfe4f0) border-box;
`;

const AiLogo = styled.span`
  width: 114px;
  background: linear-gradient(90deg, #ff5500 55%, #ff9a66);
  background-clip: text;
  color: transparent;
  font-size: 54px;
  font-style: italic;
  font-weight: 900;
  line-height: 64px;
`;

const AiText = styled.a`
  flex: 1;
  margin: 0 12px 0 23px;
  font-size: 46px;
  line-height: 64px;
  white-space: nowrap;
`;

const AiGo = styled.button`
  display: flex;
  align-items: center;
  justify-content: center;
  width: 92px;
  height: 92px;
  border-radius: 50%;
  background: linear-gradient(225deg, #ff9440, #ff5500 60%);
`;

const Notice = styled.div`
  display: flex;
  align-items: center;
  height: 98px;
  margin: 0 20px 14px;
  padding: 0 40px 0 33px;
  border-radius: 49px;
  background: #fceee6;

  a {
    flex: 1;
    margin-left: 58px;
    font-size: 42px;
    line-height: 56px;
    white-space: nowrap;
  }
`;

const CloseButton = styled.button`
  padding-left: 18px;
  border-left: 2px solid #e08a55;
`;

const BottomNav = styled.nav`
  display: flex;
  flex: 1;
  min-height: 187px;
  border-top: 2px solid #d6dad8;
  background: #f7f8fa;
`;

const IndexCell = styled.div`
  display: flex;
  flex-direction: column;
  align-items: center;
  width: 298px;
  padding: 8px 0 0;
  font-size: 40px;
  line-height: 44px;

  > span {
    margin: 14px 0 11px;
  }

  div {
    display: flex;
    align-self: flex-end;
    justify-content: space-between;
    width: 254px;
    padding-right: 3px;
  }
`;

const NavItem = styled.button`
  flex: 1;
  display: flex;
  flex-direction: column;
  align-items: center;
  gap: 16px;
  padding-top: 9px;
  font-size: 38px;
  line-height: 52px;
`;
